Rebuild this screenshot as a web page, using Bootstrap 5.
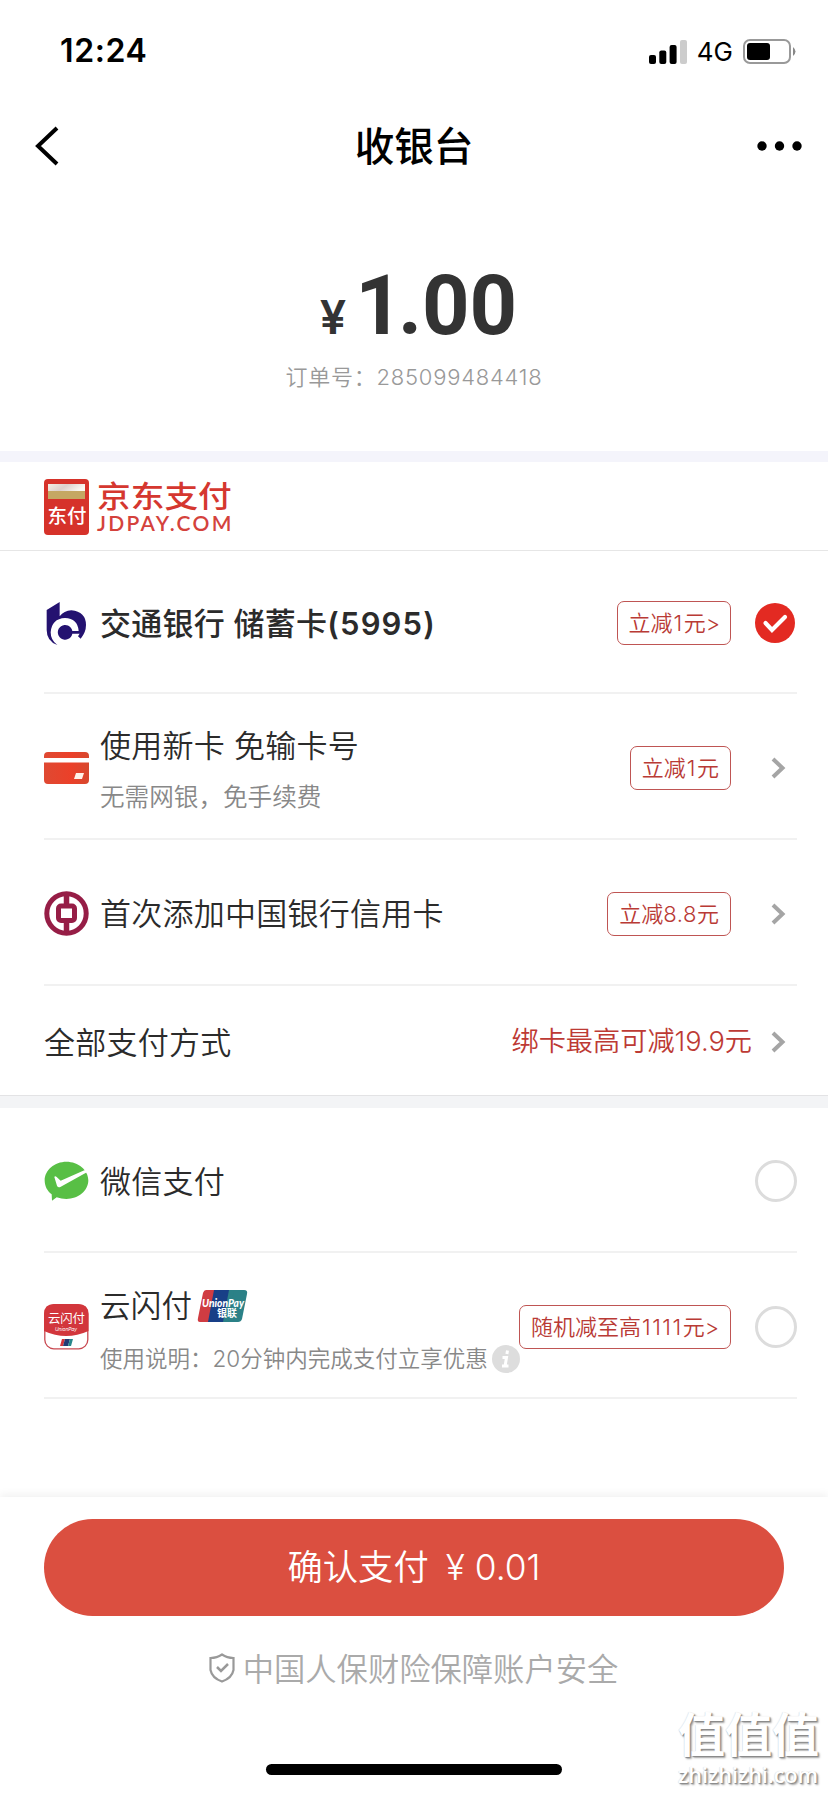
<!DOCTYPE html>
<html lang="zh-CN">
<head>
<meta charset="utf-8">
<meta name="viewport" content="width=device-width, initial-scale=1">
<title>收银台</title>
<link href="https://cdn.jsdelivr.net/npm/bootstrap@5.3.0/dist/css/bootstrap.min.css" rel="stylesheet">
<style>
body{font-family:Inter,"Noto Sans CJK SC",sans-serif;color:#2b2b2b;background:#fff;line-height:1;min-height:1793px;font-size:31px;overflow-x:hidden}
svg{display:block;flex:none}
.status{height:100px;padding:3px 32px 0 60px;color:#000}
.clock{font-size:32px;font-weight:600;letter-spacing:.6px;margin-top:-1px}
.net{font-size:26px;font-weight:400;margin:1px 10px 0 10px}
.titlebar{height:92px;padding:0 26px 0 35px;color:#000}
.titlebar h1{font-size:39.6px;font-weight:500;line-height:1;padding:4px 7px 0 0}
.amount{height:259px;padding-top:75px}
.price{font-family:Roboto,sans-serif;font-weight:700;color:#333;font-size:83px;height:78px;line-height:78px;padding-left:9px}
.price .yen{font-family:Inter,sans-serif;font-size:47px;font-weight:600;margin-right:9px}
.price .unit{margin-right:-5px}
.order{font-size:22px;font-weight:350;color:#999;margin-top:21px;letter-spacing:.75px}
.band{height:11px;background:#f4f4fb}
.brandbar{height:89px;padding:17px 44px 0;border-bottom:1px solid #e6e6e6}
.brand-name{font-size:33.7px;font-weight:500;color:#d5372f;line-height:31px;height:31px;margin-top:2px;transform:scaleY(.87)}
.brand-site{font-family:Lato,sans-serif;font-size:21px;font-weight:600;color:#d4423c;letter-spacing:2.3px;line-height:21px}
.pay-row{margin:0 31px 0 44px;padding-top:3px;height:146px;border-bottom:2px solid #f1f1f1}
.pay-icon{width:45px;margin-right:11px}
.pay-title{font-size:31px;letter-spacing:.25px;font-weight:350;white-space:nowrap}
.pay-sub{font-size:24.6px;font-weight:350;color:#888;white-space:nowrap}
.offer{font-size:22px;font-weight:350;color:#b93a35;border:1.5px solid #bf5553;border-radius:7px;height:44px;padding:0 11px;white-space:nowrap}
.offer i{font-style:normal;letter-spacing:1.5px;margin-left:1px}
.mark-col{width:66px}
.ring{width:42px;height:42px;border:3px solid #dcdcdc;border-radius:50%}
.save{font-size:27.2px;font-weight:350;color:#bd3a34}
.arrow{margin-right:9px}
.dock{height:296px;box-shadow:0 -3px 8px rgba(0,0,0,.055);padding:22px 44px 0;position:relative}
.pay-btn{width:740px;height:97px;border-radius:49px;background:#db4f40;color:#fff;font-size:35.3px;font-weight:350;line-height:1}
.pay-btn:hover{background:#cf4638;color:#fff}
.safe{font-size:31.3px;font-weight:350;color:#aaa;margin-top:38px;margin-left:-1px;height:34px}
.home{width:296px;height:11px;border-radius:6px;background:#000;margin:76px auto 0}
.stamp{position:absolute;right:7px;bottom:3px;width:143px;color:#fff;text-shadow:1px 1px 1px #888,2px 2px 2px #aaa,-.5px 0 1px #ddd}
.stamp-cn{font-size:47px;font-weight:700;line-height:50px}
.stamp-en{font-family:"Open Sans",sans-serif;font-size:21.5px;font-weight:600;line-height:30px;white-space:nowrap}
</style>
</head>
<body>
<header>
  <div class="status d-flex align-items-center justify-content-between">
    <span class="clock">12:24</span>
    <div class="d-flex align-items-center">
      <svg width="38" height="24" viewBox="0 0 38 24"><rect y="15" width="7" height="9" rx="2"/><rect x="10.300" y="10.500" width="7" height="13.500" rx="2"/><rect x="20.600" y="5" width="7" height="19" rx="2"/><rect x="31" width="7" height="24" rx="2" fill="#ccc"/></svg>
      <span class="net">4G</span>
      <svg width="53" height="25" viewBox="0 0 53 25"><rect x="1" y="1" width="46" height="23" rx="6" fill="none" stroke="#999" stroke-width="2"/><rect x="4" y="4" width="23" height="17" rx="3"/><path d="M50 8q5 4.500 0 9z" fill="#888"/></svg>
    </div>
  </div>
  <div class="titlebar d-flex align-items-center justify-content-between">
    <svg width="44" height="40" viewBox="0 0 44 40"><path d="M22 2L3 20l19 18" fill="none" stroke="#000" stroke-width="4"/></svg>
    <h1 class="m-0">收银台</h1>
    <svg width="46" height="12" viewBox="0 0 46 12"><circle cx="6" cy="6" r="4.700"/><circle cx="23.500" cy="6" r="4.700"/><circle cx="41" cy="6" r="4.700"/></svg>
  </div>
</header>
<section class="amount text-center">
  <div class="price d-flex justify-content-center align-items-baseline"><span class="yen">¥</span><span><span class="unit">1</span>.00</span></div>
  <div class="order">订单号：285099484418</div>
</section>
<div class="band"></div>
<main>
  <div class="brandbar d-flex">
    <svg width="45" height="56" viewBox="0 0 45 56"><defs><linearGradient id="gold" x2="1" y2=".3"><stop stop-color="#f4eee5"/><stop offset=".5" stop-color="#ddd0cc"/><stop offset="1" stop-color="#faf8f2"/></linearGradient></defs><rect width="45" height="56" rx="4" fill="#d6322a"/><rect x="4" y="5" width="37" height="8" fill="url(#gold)"/><rect x="4" y="12" width="37" height="8" fill="#c5a763"/><text x="3.500" y="43.500" font-size="19.500" font-weight="500" fill="#fff" textLength="39">东付</text></svg>
    <div class="ms-2">
      <div class="brand-name">京东支付</div>
      <div class="brand-site">JDPAY.COM</div>
    </div>
  </div>

  <div class="pay-row d-flex align-items-center" style="height:143px">
    <div class="pay-icon"><svg width="45" height="47" viewBox="132 478 135 141"><path fill="#241270" d="M140 508L179 484V527Q192 510 214 509Q258 514 258 553Q258 575 242 594L234 587L239 579H217A22 22 0 1 1 217 571H236Q233 533 195 532Q155 534 152 575Q152 599 172 613Q140 602 140 568Z"/></svg></div>
    <div class="pay-title" style="font-weight:500">交通银行 储蓄卡<span class="fw-semibold" style="letter-spacing:1.150px">(5995)</span></div>
    <div class="offer ms-auto d-flex align-items-center" style="padding:0 10px">立减<i>1</i>元&gt;</div>
    <div class="mark-col d-flex justify-content-end"><svg width="42" height="42" viewBox="0 0 42 42"><circle cx="20" cy="21" r="20" fill="#e32a22"/><path d="M10.500 21l6.500 7 13-13" fill="none" stroke="#fff" stroke-width="4.200" stroke-linecap="round"/></svg></div>
  </div>

  <div class="pay-row d-flex align-items-center">
    <div class="pay-icon"><svg width="45" height="32" viewBox="0 0 45 32"><defs><linearGradient id="cardred"><stop stop-color="#df4932"/><stop offset=".6" stop-color="#eb4029"/><stop offset="1" stop-color="#d7482e"/></linearGradient></defs><path d="M0 6V4Q0 0 4 0H41Q45 0 45 4V6ZM0 10.500H45V28Q45 32 41 32H4Q0 32 0 28Z" fill="url(#cardred)"/><path d="M32 21h8l-2 6h-8z" fill="#fff2e8"/></svg></div>
    <div class="pt-1">
      <div class="pay-title">使用新卡 免输卡号</div>
      <div class="pay-sub" style="margin-top:24px">无需网银，免手续费</div>
    </div>
    <div class="offer ms-auto d-flex align-items-center">立减<i>1</i>元</div>
    <div class="mark-col"><svg class="arrow ms-auto" width="20" height="24" viewBox="0 0 20 24"><path d="M5 3l9.500 9L5 21" fill="none" stroke="#a5a5a5" stroke-width="4"/></svg></div>
  </div>

  <div class="pay-row d-flex align-items-center">
    <div class="pay-icon"><svg width="45" height="45" viewBox="0 0 45 45"><g fill="none" stroke="#961d46"><circle cx="22.500" cy="22.500" r="19.700" stroke-width="5"/><path d="M22.500 3v11M22.500 30v12" stroke-width="5.500"/><rect x="14.500" y="15" width="16" height="14.500" rx="2.500" stroke-width="5"/></g></svg></div>
    <div class="pay-title">首次添加中国银行信用卡</div>
    <div class="offer ms-auto d-flex align-items-center">立减<span style="letter-spacing:.5px">8.8</span>元</div>
    <div class="mark-col"><svg class="arrow ms-auto" width="20" height="24" viewBox="0 0 20 24"><path d="M5 3l9.500 9L5 21" fill="none" stroke="#a5a5a5" stroke-width="4"/></svg></div>
  </div>

  <div class="pay-row d-flex align-items-center border-0" style="height:109px">
    <div class="pay-title">全部支付方式</div>
    <div class="save ms-auto">绑卡最高可减19.9元</div>
    <svg class="arrow ms-3" width="20" height="24" viewBox="0 0 20 24"><path d="M5 3l9.500 9L5 21" fill="none" stroke="#a5a5a5" stroke-width="4"/></svg>
  </div>
  <div class="band" style="height:13px;background:#f3f4f6;border-top:1px solid #e3e3e5"></div>

  <div class="pay-row d-flex align-items-center" style="height:145px">
    <div class="pay-icon"><svg width="45" height="40" viewBox="132 543 135 120"><path fill="#58bf45" d="M199 545C235 545 265 570 265 601S235 657 199 657Q184 657 170 652L156 662L155 643C141 633 134 618 134 601C134 570 164 545 199 545Z"/><path fill="#fff" d="M163 591Q165 586 170 591L182 602L253 571Q259 569 262 576L181 621Q174 624 171 617Z"/></svg></div>
    <div class="pay-title">微信支付</div>
    <div class="ring ms-auto"></div>
  </div>

  <div class="pay-row d-flex align-items-center">
    <div class="pay-icon"><svg width="45" height="46" viewBox="0 0 45 46"><rect x=".8" y=".8" width="43" height="44" rx="9" fill="#fff" stroke="#c94850" stroke-width="1.300"/><path d="M0 27V10Q0 0 10 0H34Q44.500 0 44.500 10V27Q22 37 0 27Z" fill="#d2363c"/><text x="4" y="19" font-size="12.400" fill="#fff" textLength="37">云闪付</text><text x="11" y="26.500" font-size="5" fill="#fff" font-style="italic" textLength="22">UnionPay</text><path d="M18 35h3l-2 7h-3z" fill="#d2363c"/><path d="M21 35h5l-2 7h-5z" fill="#213a73"/><path d="M26 35h3l-2 7h-3z" fill="#27868a"/></svg></div>
    <div style="padding-top:9px">
      <div class="d-flex align-items-center"><span class="pay-title" style="font-size:30.500px">云闪付</span><svg class="ms-1" width="52" height="34" viewBox="0 0 52 34"><path d="M10 1H20L13 33H4Q1 33 2 29L7 4Q8 1 10 1Z" fill="#d03c42"/><path d="M18 1H34L28 33H12Z" fill="#183f87"/><path d="M35 1H48Q52 1 51 5L46 30Q45 33 42 33H28Z" fill="#2b8187"/><path d="M33 1H38L32 33H27Z" fill="#2b8187"/><text x="6" y="17.500" font-family="Lato" font-size="10.500" font-style="italic" font-weight="900" fill="#fff" textLength="42" lengthAdjust="spacingAndGlyphs">UnionPay</text><text x="21" y="28" font-size="10" font-weight="700" fill="#fff" textLength="20">银联</text></svg></div>
      <div class="pay-sub d-flex align-items-center" style="font-size:22.500px;margin-top:22px;width:408px;height:28px">使用说明：20分钟内完成支付立享优惠<svg class="ms-1" width="28" height="28" viewBox="0 0 28 28"><circle cx="14" cy="14" r="14" fill="#ddd"/><path d="M15.500 5.500l-.6 3.500M10.500 12.500h4l-1.300 8M10 21h6.500" stroke="#fff" stroke-width="3" fill="none"/></svg></div>
    </div>
    <div class="offer ms-auto d-flex align-items-center">随机减至高<i>1111</i>元&gt;</div>
    <div class="mark-col d-flex justify-content-end"><div class="ring"></div></div>
  </div>
  <div style="height:98px"></div>
</main>
<footer class="dock">
  <button class="btn pay-btn border-0 p-0 d-flex align-items-center justify-content-center">确认支付<span style="margin-left:17px">¥</span><span style="margin-left:10px">0.01</span></button>
  <div class="safe d-flex align-items-center justify-content-center"><svg width="26" height="30" viewBox="0 0 26 30" style="margin:-6px 8px 0 0"><path d="M13 1.500Q18 5 24.500 5V17Q23 25 13 28.500Q3 25 1.500 17V5Q8 5 13 1.500Z" fill="none" stroke="#999" stroke-width="2.200"/><path d="M8 14l4 4 7-7" fill="none" stroke="#999" stroke-width="2.500"/></svg>中国人保财险保障账户安全</div>
  <div class="home"></div>
  <div class="stamp"><div class="stamp-cn">值值值</div><div class="stamp-en">zhizhizhi.com</div></div>
</footer>
<script src="https://cdn.jsdelivr.net/npm/bootstrap@5.3.0/dist/js/bootstrap.bundle.min.js"></script>
</body>
</html>
